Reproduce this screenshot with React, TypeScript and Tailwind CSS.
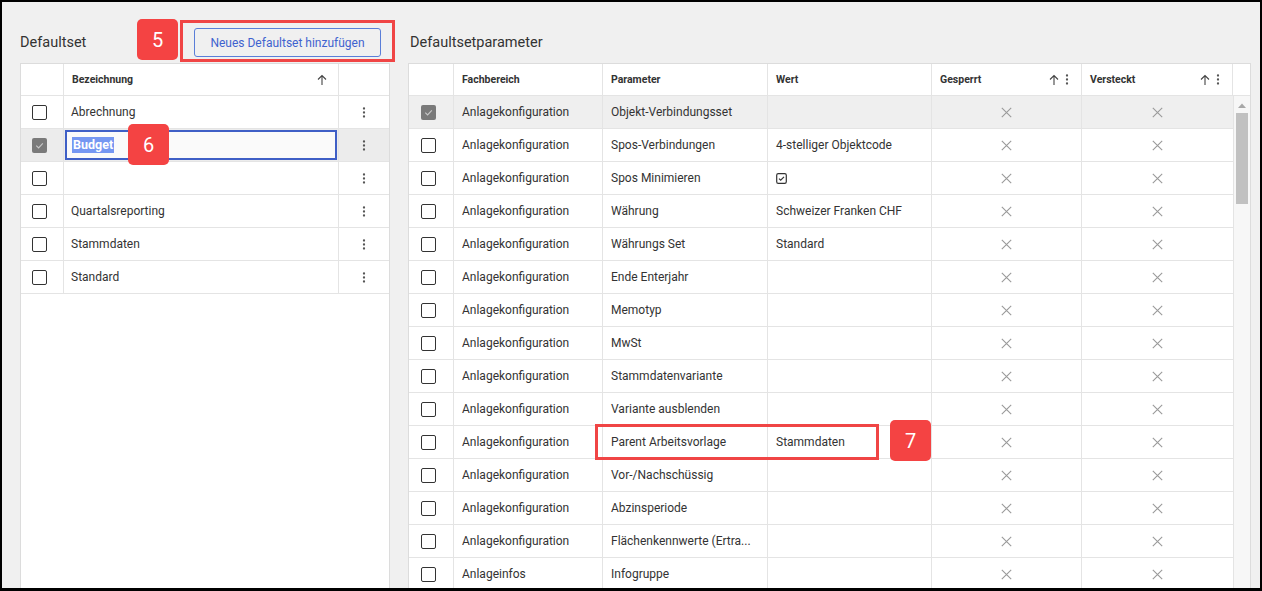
import React from "react";

const FONT = { fontFamily: "Roboto, 'Noto Sans', sans-serif" };

function Check({ checked }: { checked?: boolean }) {
  if (checked) {
    return (
      <div className="w-[15px] h-[15px] rounded-[2px] bg-[#7a7a7a] flex items-center justify-center">
        <svg width="11" height="11" viewBox="0 0 12 12">
          <path d="M2.5 6.2 L5 8.6 L9.6 3.6" fill="none" stroke="#c9c9c9" strokeWidth="1.2" />
        </svg>
      </div>
    );
  }
  return <div className="w-[15px] h-[15px] rounded-[2px] border-[1.5px] border-[#333]" />;
}

function Dots() {
  return (
    <svg width="4" height="11" viewBox="0 0 4 11">
      <circle cx="2" cy="1.5" r="1.15" fill="#555" />
      <circle cx="2" cy="5.5" r="1.15" fill="#555" />
      <circle cx="2" cy="9.5" r="1.15" fill="#555" />
    </svg>
  );
}

function UpArrow() {
  return (
    <svg width="10" height="12" viewBox="0 0 10 12">
      <path d="M5 11 L5 1.5 M1 5.5 L5 1.5 L9 5.5" fill="none" stroke="#444" strokeWidth="1.1" />
    </svg>
  );
}

function XIcon() {
  return (
    <svg width="11" height="11" viewBox="0 0 11 11">
      <path d="M0.8 0.8 L10.2 10.2 M10.2 0.8 L0.8 10.2" stroke="#9a9a9a" strokeWidth="1.1" />
    </svg>
  );
}

function MiniCheck() {
  return (
    <svg width="11" height="11" viewBox="0 0 11 11">
      <rect x="0.7" y="0.7" width="9.6" height="9.6" rx="1.6" fill="none" stroke="#333" strokeWidth="1.2" />
      <path d="M3 5.6 L4.7 7.2 L8 3.8" fill="none" stroke="#333" strokeWidth="1.2" />
    </svg>
  );
}

const leftRows = ["Abrechnung", "Budget", "", "Quartalsreporting", "Stammdaten", "Standard"];

const rightRows: [string, string, string][] = [
  ["Anlagekonfiguration", "Objekt-Verbindungsset", ""],
  ["Anlagekonfiguration", "Spos-Verbindungen", "4-stelliger Objektcode"],
  ["Anlagekonfiguration", "Spos Minimieren", "__check"],
  ["Anlagekonfiguration", "Währung", "Schweizer Franken CHF"],
  ["Anlagekonfiguration", "Währungs Set", "Standard"],
  ["Anlagekonfiguration", "Ende Enterjahr", ""],
  ["Anlagekonfiguration", "Memotyp", ""],
  ["Anlagekonfiguration", "MwSt", ""],
  ["Anlagekonfiguration", "Stammdatenvariante", ""],
  ["Anlagekonfiguration", "Variante ausblenden", ""],
  ["Anlagekonfiguration", "Parent Arbeitsvorlage", "Stammdaten"],
  ["Anlagekonfiguration", "Vor-/Nachschüssig", ""],
  ["Anlagekonfiguration", "Abzinsperiode", ""],
  ["Anlagekonfiguration", "Flächenkennwerte (Ertra...", ""],
  ["Anlageinfos", "Infogruppe", ""],
];

function Badge({ n, className }: { n: string; className: string }) {
  return (
    <div
      className={
        "absolute w-[41px] h-[41px] rounded-[5px] bg-[#f44343] text-white text-[20px] flex items-center justify-center " +
        className
      }
    >
      {n}
    </div>
  );
}

export default function App() {
  return (
    <div className="relative w-[1262px] h-[591px] bg-black overflow-hidden text-[#333]" style={FONT}>
      <div className="mt-[2px] ml-[2px] w-[1258px] h-[586px] bg-[#f0f0f0] flex pl-[18px] gap-[18px]">
        {/* Left column */}
        <div className="w-[370px] flex flex-col">
          <div className="h-[61px] pt-[26px] flex items-start">
            <div className="w-[174px] h-[29px] flex items-center text-[14.5px] text-[#333]">Defaultset</div>
            <div className="w-[187px] h-[29px] border border-[#5a7ed8] rounded-[3px] flex items-center justify-center text-[12px] text-[#3f63cf]">
              Neues Defaultset hinzufügen
            </div>
          </div>
          <div className="flex-1 bg-white border border-b-0 border-[#dcdcdc] flex flex-col">
            <div className="h-[32px] flex border-b border-[#e4e4e4]">
              <div className="w-[43px] border-r border-[#e4e4e4]" />
              <div className="flex-1 border-r border-[#e4e4e4] flex items-center pl-[8px] pr-[11px] justify-between">
                <span className="text-[10.5px] font-bold text-[#333]">Bezeichnung</span>
                <UpArrow />
              </div>
              <div className="w-[50px]" />
            </div>
            {leftRows.map((r, i) => {
              const sel = i === 1;
              return (
                <div key={i} className={"h-[33px] flex border-b border-[#e4e4e4] " + (sel ? "bg-[#ececec]" : "")}>
                  <div className="w-[43px] border-r border-[#e4e4e4] flex items-center pl-[11px]">
                    <Check checked={sel} />
                  </div>
                  <div className="flex-1 border-r border-[#e4e4e4] flex items-center text-[12px]">
                    {sel ? (
                      <div className="mx-[1px] w-full h-[30px] border-2 border-[#3f5fc6] bg-[#fafafa] flex items-center pl-[5px]">
                        <span className="bg-[#7597f2] text-white font-bold text-[12.5px] leading-[16px] px-[1px]">Budget</span>
                      </div>
                    ) : (
                      <span className="pl-[7px]">{r}</span>
                    )}
                  </div>
                  <div className="w-[50px] flex items-center justify-center">
                    <Dots />
                  </div>
                </div>
              );
            })}
          </div>
        </div>

        {/* Right column */}
        <div className="w-[843px] flex flex-col">
          <div className="h-[61px] pt-[26px]">
            <div className="h-[29px] flex items-center pl-[2px] text-[14.5px] text-[#333]">Defaultsetparameter</div>
          </div>
          <div className="flex-1 bg-white border border-b-0 border-[#dcdcdc] flex flex-col overflow-hidden">
            <div className="h-[32px] flex border-b border-[#e4e4e4] text-[10.5px] font-bold shrink-0">
              <div className="w-[45px] border-r border-[#e4e4e4]" />
              <div className="w-[149px] border-r border-[#e4e4e4] flex items-center pl-[8px]">Fachbereich</div>
              <div className="w-[165px] border-r border-[#e4e4e4] flex items-center pl-[8px]">Parameter</div>
              <div className="w-[164px] border-r border-[#e4e4e4] flex items-center pl-[8px]">Wert</div>
              <div className="w-[150px] border-r border-[#e4e4e4] flex items-center pl-[8px] pr-[12px] justify-between">
                <span>Gesperrt</span>
                <span className="flex items-center gap-[6px]">
                  <UpArrow />
                  <Dots />
                </span>
              </div>
              <div className="w-[151px] border-r border-[#e4e4e4] flex items-center pl-[8px] pr-[12px] justify-between">
                <span>Versteckt</span>
                <span className="flex items-center gap-[6px]">
                  <UpArrow />
                  <Dots />
                </span>
              </div>
              <div className="flex-1" />
            </div>
            <div className="flex flex-1 min-h-0">
              <div className="w-[824px] flex flex-col">
                {rightRows.map((r, i) => {
                  const sel = i === 0;
                  return (
                    <div
                      key={i}
                      className={"h-[33px] shrink-0 flex border-b border-[#e4e4e4] text-[12px] " + (sel ? "bg-[#efefef]" : "")}
                    >
                      <div className="w-[45px] border-r border-[#e4e4e4] flex items-center pl-[12px]">
                        <Check checked={sel} />
                      </div>
                      <div className="w-[149px] border-r border-[#e4e4e4] flex items-center pl-[8px]">{r[0]}</div>
                      <div className="w-[165px] border-r border-[#e4e4e4] flex items-center pl-[8px] whitespace-nowrap">{r[1]}</div>
                      <div className="w-[164px] border-r border-[#e4e4e4] flex items-center pl-[8px] whitespace-nowrap">
                        {r[2] === "__check" ? <MiniCheck /> : r[2]}
                      </div>
                      <div className="w-[150px] border-r border-[#e4e4e4] flex items-center justify-center">
                        <XIcon />
                      </div>
                      <div className="w-[151px] flex items-center justify-center">
                        <XIcon />
                      </div>
                    </div>
                  );
                })}
              </div>
              <div className="flex-1 border-l border-[#e4e4e4] bg-[#f7f7f7] flex flex-col items-center pt-[7px]">
                <svg width="8" height="5" viewBox="0 0 8 5">
                  <path d="M0 5 L4 0.5 L8 5 Z" fill="#a8a8a8" />
                </svg>
                <div className="mt-[5px] w-[12px] h-[91px] bg-[#c1c1c1]" />
              </div>
            </div>
          </div>
        </div>
      </div>

      {/* Annotations */}
      <div className="absolute left-[180px] top-[20px] w-[215px] h-[42px] border-[3px] border-[#f04545]" />
      <Badge n="5" className="left-[137px] top-[19px]" />
      <Badge n="6" className="left-[128px] top-[124px]" />
      <div className="absolute left-[595px] top-[424px] w-[284px] h-[36px] border-[3px] border-[#f04545]" />
      <Badge n="7" className="left-[890px] top-[420px]" />
    </div>
  );
}
